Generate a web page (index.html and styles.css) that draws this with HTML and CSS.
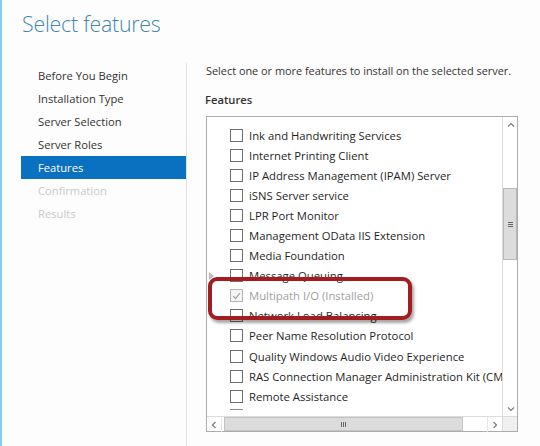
FILE: index.html
```html
<!DOCTYPE html>
<html>
<head>
<meta charset="utf-8">
<link rel="stylesheet" href="styles.css">
</head>
<body>
<div class="page">
  <h1 class="title">Select features</h1>
  <div class="main">
    <nav class="nav">
      <div class="nav-item">Before You Begin</div>
      <div class="nav-item">Installation Type</div>
      <div class="nav-item">Server Selection</div>
      <div class="nav-item">Server Roles</div>
      <div class="nav-item active">Features</div>
      <div class="nav-item disabled">Confirmation</div>
      <div class="nav-item disabled">Results</div>
    </nav>
    <div class="content">
      <p class="desc">Select one or more features to install on the selected server.</p>
      <p class="label">Features</p>
      <div class="listbox">
        <div class="rows">
          <div class="row"><span class="cb"></span><span class="txt">Ink and Handwriting Services</span></div>
          <div class="row"><span class="cb"></span><span class="txt">Internet Printing Client</span></div>
          <div class="row"><span class="cb"></span><span class="txt">IP Address Management (IPAM) Server</span></div>
          <div class="row"><span class="cb"></span><span class="txt">iSNS Server service</span></div>
          <div class="row"><span class="cb"></span><span class="txt">LPR Port Monitor</span></div>
          <div class="row"><span class="cb"></span><span class="txt">Management OData IIS Extension</span></div>
          <div class="row"><span class="cb"></span><span class="txt">Media Foundation</span></div>
          <div class="row"><span class="exp"></span><span class="cb"></span><span class="txt">Message Queuing</span></div>
          <div class="row installed"><span class="cb checked"><svg viewBox="0 0 12 12" width="12" height="12"><path d="M2.5 6.2 L5 8.8 L9.6 3" fill="none" stroke="#9a9a9a" stroke-width="1.3"/></svg></span><span class="txt">Multipath I/O (Installed)</span></div>
          <div class="row"><span class="cb"></span><span class="txt">Network Load Balancing</span></div>
          <div class="row"><span class="cb"></span><span class="txt">Peer Name Resolution Protocol</span></div>
          <div class="row"><span class="cb"></span><span class="txt">Quality Windows Audio Video Experience</span></div>
          <div class="row"><span class="cb"></span><span class="txt">RAS Connection Manager Administration Kit (CMAK)</span></div>
          <div class="row"><span class="cb"></span><span class="txt">Remote Assistance</span></div>
          <div class="row partial"><span class="cb-edge"></span></div>
          <div class="highlight"></div>
        </div>
        <div class="vscroll">
          <div class="sbtn"><svg viewBox="0 0 8 6" width="8" height="6"><path d="M1 4.5 L4 1.5 L7 4.5" fill="none" stroke="#7a7a7a" stroke-width="1.2"/></svg></div>
          <div class="vtrack">
            <div class="vthumb"><span class="grip-h"></span><span class="grip-h"></span><span class="grip-h"></span></div>
          </div>
          <div class="sbtn"><svg viewBox="0 0 8 6" width="8" height="6"><path d="M1 1.5 L4 4.5 L7 1.5" fill="none" stroke="#7a7a7a" stroke-width="1.2"/></svg></div>
        </div>
        <div class="hscroll">
          <div class="sbtn"><svg viewBox="0 0 6 8" width="6" height="8"><path d="M4.5 1 L1.5 4 L4.5 7" fill="none" stroke="#7a7a7a" stroke-width="1.2"/></svg></div>
          <div class="htrack">
            <div class="hthumb"><span class="grip-v"></span><span class="grip-v"></span><span class="grip-v"></span></div>
          </div>
          <div class="sbtn"><svg viewBox="0 0 6 8" width="6" height="8"><path d="M1.5 1 L4.5 4 L1.5 7" fill="none" stroke="#7a7a7a" stroke-width="1.2"/></svg></div>
        </div>
        <div class="corner"></div>
      </div>
    </div>
  </div>
</div>
</body>
</html>
```
FILE: styles.css
```css
html, body {
  margin: 0;
  padding: 0;
  background: #fdfdfd;
}
.page {
  width: 538px;
  height: 446px;
  border-left: 2px solid #86cdee;
  font-family: "Open Sans", "Noto Sans", sans-serif;
  overflow: hidden;
  display: flex;
  flex-direction: column;
}
.title {
  margin: 0;
  padding: 9px 0 0 20px;
  height: 54px;
  box-sizing: border-box;
  font-weight: 300;
  font-size: 21.3px;
  line-height: 30px;
  color: #3f87b1;
  letter-spacing: -0.2px;
}
.main {
  display: flex;
  flex: 1;
  padding-top: 9px;
}
.nav {
  width: 165px;
  margin-left: 19px;
  border-right: 1px solid #e2e2e2;
  padding-top: 1px;
}
.nav-item {
  height: 23px;
  line-height: 23px;
  padding-left: 17px;
  font-size: 11.2px;
  color: #333;
}
.nav-item.active {
  background: #0a70c0;
  color: #fff;
}
.nav-item.disabled {
  color: #c9c9c9;
}
.content {
  padding-left: 18px;
  flex: 1;
}
.desc {
  margin: 0;
  padding-left: 1px;
  height: 16px;
  line-height: 16px;
  font-size: 10.9px;
  color: #333;
}
.label {
  margin: 12px 0 0 0;
  height: 17px;
  line-height: 17px;
  font-size: 11.2px;
  font-weight: 600;
  color: #333;
}
.listbox {
  margin-top: 8px;
  margin-left: 1px;
  width: 312px;
  height: 316px;
  box-sizing: border-box;
  border: 1px solid #acacac;
  background: #fff;
  display: grid;
  grid-template-columns: 1fr 15px;
  grid-template-rows: 1fr 15px;
}
.rows {
  position: relative;
  overflow: hidden;
  padding-top: 8px;
}
.row {
  height: 20.1px;
  display: flex;
  align-items: center;
  padding-left: 23px;
  white-space: nowrap;
  position: relative;
  font-size: 11.3px;
  color: #1f1f1f;
}
.row.partial {
  align-items: flex-start;
  padding-top: 3px;
  box-sizing: border-box;
}
.cb-edge {
  width: 13px;
  height: 1px;
  background: #8a8a8a;
}
.exp {
  position: absolute;
  left: 2px;
  top: 6px;
  width: 0;
  height: 0;
  border-left: 5px solid #bdbdbd;
  border-top: 4px solid transparent;
  border-bottom: 4px solid transparent;
}
.cb {
  width: 11px;
  height: 11px;
  border: 1px solid #707070;
  background: #fff;
  flex: none;
  margin-right: 6px;
  display: flex;
  align-items: center;
  justify-content: center;
}
.cb.checked {
  border-color: #b5b5b5;
  background: #f4f4f4;
}
.installed .txt {
  color: #a0a0a0;
}
.highlight {
  position: absolute;
  left: 1px;
  top: 160px;
  width: 196px;
  height: 35px;
  border: 4px solid #a31c1f;
  border-radius: 9px;
  box-shadow: 2px 3px 3px rgba(0,0,0,0.35);
}
.vscroll {
  border-left: 1px solid #dcdcdc;
  background: #fff;
  display: flex;
  flex-direction: column;
}
.sbtn {
  width: 15px;
  height: 15px;
  flex: none;
  display: flex;
  align-items: center;
  justify-content: center;
  box-sizing: border-box;
}
.vtrack {
  flex: 1;
  position: relative;
}
.vthumb {
  position: absolute;
  left: 0;
  right: 0;
  top: 56px;
  height: 72px;
  background: #dcdcdc;
  border: 1px solid #b8b8b8;
  box-sizing: border-box;
  display: flex;
  flex-direction: column;
  align-items: center;
  justify-content: center;
  gap: 1px;
}
.grip-h {
  width: 5px;
  height: 1px;
  background: #666;
}
.hscroll {
  border-top: 1px solid #dcdcdc;
  display: flex;
  background: #fff;
}
.hscroll .sbtn {
  border-right: 1px solid #e6e6e6;
}
.hscroll .sbtn:last-child {
  border-right: none;
  border-left: 1px solid #e6e6e6;
}
.htrack {
  flex: 1;
  position: relative;
}
.hthumb {
  position: absolute;
  left: 2px;
  top: 0;
  bottom: 0;
  width: 239px;
  background: #dcdcdc;
  border: 1px solid #c4c4c4;
  box-sizing: border-box;
  display: flex;
  align-items: center;
  justify-content: center;
  gap: 1px;
}
.grip-v {
  width: 1px;
  height: 5px;
  background: #666;
}
.corner {
  background: #f0f0f0;
  border-left: 1px solid #dcdcdc;
  border-top: 1px solid #dcdcdc;
}
```
